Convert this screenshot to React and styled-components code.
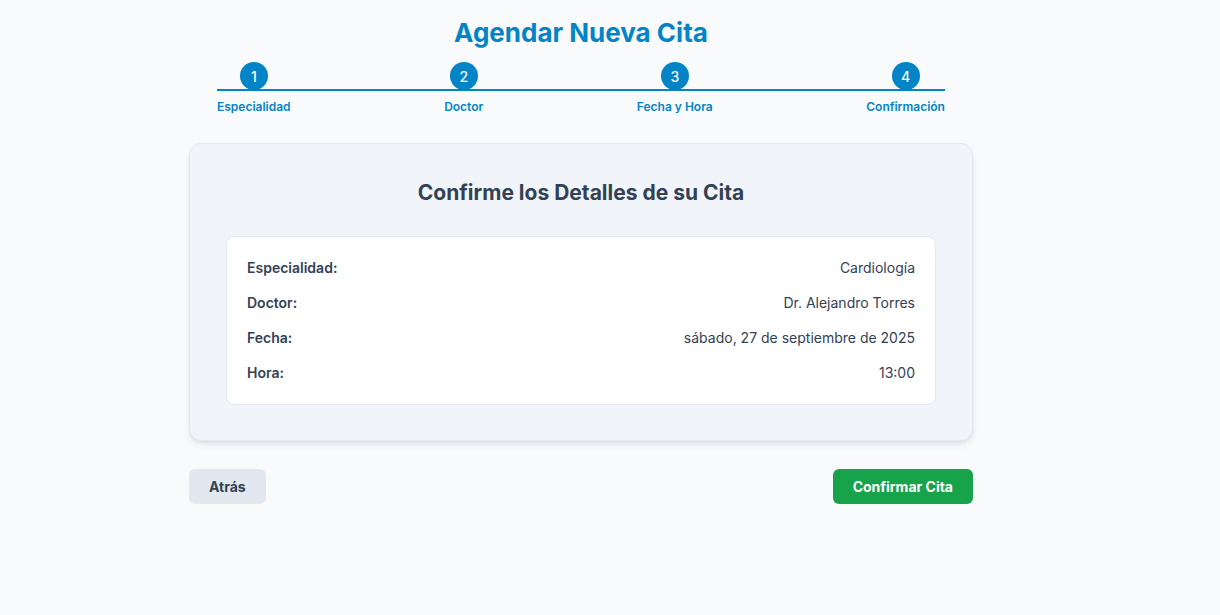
import styled, { createGlobalStyle } from 'styled-components';

const Global = createGlobalStyle`
  body { margin: 0; background: #f8fafc; font-family: Inter, "Noto Sans", sans-serif; color: #334155; }
  * { box-sizing: border-box; }
`;

const Page = styled.div`
  min-height: 615px; padding: 15px 58px 0 0;
`;
const Wrap = styled.div`width: 784px; margin: 0 auto;`;
const Title = styled.h1`
  margin: 0 0 11px; text-align: center; font-size: 26px; line-height: 36px;
  font-weight: 700; color: #0284c7;
`;
const Steps = styled.div`
  position: relative; display: flex; justify-content: space-between;
  margin: 0 28px;
  &::before {
    content: ''; position: absolute; left: 0; right: 0; top: 27px;
    height: 2px; background: #0284c7;
  }
`;
const Step = styled.div`display: flex; flex-direction: column; align-items: center; gap: 9px;`;
const Dot = styled.div`
  position: relative; z-index: 1; width: 28px; height: 28px; border-radius: 50%;
  background: #0284c7; color: #fff; font-size: 14px; font-weight: 500;
  display: flex; align-items: center; justify-content: center;
`;
const StepLabel = styled.span`font-size: 12px; line-height: 16px; font-weight: 600; color: #0284c7;`;
const Card = styled.div`
  margin-top: 28px; background: #f1f5f9; border: 1px solid #e2e8f0; border-radius: 12px;
  padding: 35px 36px; box-shadow: 0 4px 8px -2px rgba(15,23,42,0.12), 0 2px 4px -2px rgba(15,23,42,0.08);
`;
const CardTitle = styled.h2`
  margin: 0 0 29px; text-align: center; font-size: 21px; line-height: 28px; font-weight: 700; color: #334155;
`;
const Details = styled.div`
  background: #fff; border: 1px solid #e2e8f0; border-radius: 8px;
  padding: 21px 20px; display: flex; flex-direction: column; gap: 15px;
`;
const Row = styled.div`
  display: flex; justify-content: space-between; font-size: 14px; line-height: 20px;
  span:first-child { font-weight: 600; color: #334155; }
  span:last-child { color: #334155; }
`;
const Actions = styled.div`display: flex; justify-content: space-between; margin-top: 28px;`;
const Btn = styled.button`
  height: 35px; padding: 0 20px; border: none; border-radius: 6px;
  font-family: inherit; font-size: 14px; font-weight: 700;
  background: ${({ $primary }) => ($primary ? '#16a34a' : '#e2e8f0')};
  color: ${({ $primary }) => ($primary ? '#fff' : '#334155')};
`;

const steps = ['Especialidad', 'Doctor', 'Fecha y Hora', 'Confirmación'];
const details = [
  ['Especialidad:', 'Cardiología'],
  ['Doctor:', 'Dr. Alejandro Torres'],
  ['Fecha:', 'sábado, 27 de septiembre de 2025'],
  ['Hora:', '13:00'],
];

export default function App() {
  return (
    <Page>
      <Global />
      <Wrap>
        <Title>Agendar Nueva Cita</Title>
        <Steps>
          {steps.map((s, i) => (
            <Step key={s}>
              <Dot>{i + 1}</Dot>
              <StepLabel>{s}</StepLabel>
            </Step>
          ))}
        </Steps>
        <Card>
          <CardTitle>Confirme los Detalles de su Cita</CardTitle>
          <Details>
            {details.map(([k, v]) => (
              <Row key={k}><span>{k}</span><span>{v}</span></Row>
            ))}
          </Details>
        </Card>
        <Actions>
          <Btn>Atrás</Btn>
          <Btn $primary>Confirmar Cita</Btn>
        </Actions>
      </Wrap>
    </Page>
  );
}
